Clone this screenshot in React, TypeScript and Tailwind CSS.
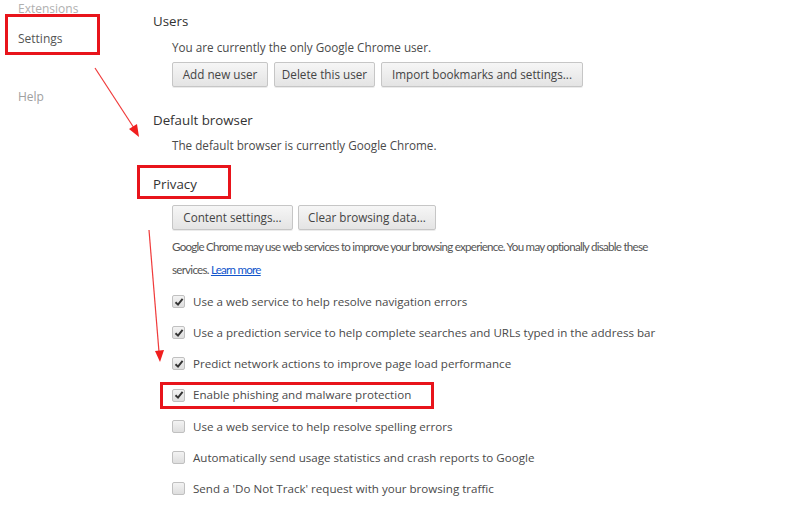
import React from "react";

const font = { fontFamily: '"Open Sans", "Noto Sans", Arial, sans-serif' };

function Btn({ label, w }: { label: string; w: string }) {
  return (
    <button
      className={`h-[25px] ${w} rounded-[2px] border border-[#c6c6c6] bg-gradient-to-b from-[#f6f6f6] to-[#e4e4e4] text-[11.7px] text-[#444] shadow-[0_1px_0_rgba(0,0,0,0.08)] shrink-0`}
    >
      {label}
    </button>
  );
}

function Check({ on, label }: { on: boolean; label: string }) {
  return (
    <div className="flex h-[31.2px] items-center gap-[8px]">
      <span className="flex h-[13px] w-[13px] items-center justify-center rounded-[2px] border border-[#c0c0c0] bg-gradient-to-b from-[#f3f3f3] to-[#dedede]">
        {on && (
          <svg width="10" height="10" viewBox="0 0 10 10">
            <path d="M1.5 5.2 L4 7.6 L8.6 1.8" fill="none" stroke="#333" strokeWidth="1.9" />
          </svg>
        )}
      </span>
      <span className="text-[11.6px] text-[#4a4a4a]">{label}</span>
    </div>
  );
}

export default function App() {
  return (
    <div className="relative h-[517px] w-[800px] overflow-hidden bg-white" style={font}>
      <div className="flex">
        <div className="w-[153px] shrink-0 pl-[18px] text-[12px]">
          <div className="leading-[18px] text-[#b0b0b0]">Extensions</div>
          <div className="mt-[12px] leading-[18px] text-[#555]">Settings</div>
          <div className="mt-[40px] leading-[18px] text-[#a0a0a0]">Help</div>
        </div>

        <div className="flex-1">
          <h2 className="mt-[12px] text-[13.3px] leading-[18px] text-[#333]">Users</h2>
          <div className="pl-[19px]">
            <p className="mt-[8px] text-[11.7px] leading-[18px] text-[#4a4a4a]">
              You are currently the only Google Chrome user.
            </p>
            <div className="mt-[6px] flex gap-[6px]">
              <Btn label="Add new user" w="w-[96px]" />
              <Btn label="Delete this user" w="w-[101px]" />
              <Btn label="Import bookmarks and settings..." w="w-[202px]" />
            </div>
          </div>

          <h2 className="mt-[24px] text-[13.3px] leading-[18px] text-[#333]">Default browser</h2>
          <p className="mt-[7px] pl-[19px] text-[11.7px] leading-[18px] text-[#4a4a4a]">
            The default browser is currently Google Chrome.
          </p>

          <h2 className="mt-[21px] text-[13.3px] leading-[18px] text-[#333]">Privacy</h2>
          <div className="pl-[19px]">
            <div className="mt-[12px] flex gap-[5px]">
              <Btn label="Content settings..." w="w-[121px]" />
              <Btn label="Clear browsing data..." w="w-[138px]" />
            </div>
            <p
              className="mt-[5px] text-[11.6px] leading-[23px] tracking-[-0.75px] text-[#555]"
              style={{ fontFamily: 'Lato, "Open Sans", sans-serif' }}
            >
              Google Chrome may use web services to improve your browsing experience. You may optionally disable these
              <br />
              services. <a className="text-[#15c] underline">Learn more</a>
            </p>
            <div className="mt-[5px]">
              <Check on label="Use a web service to help resolve navigation errors" />
              <Check on label="Use a prediction service to help complete searches and URLs typed in the address bar" />
              <Check on label="Predict network actions to improve page load performance" />
              <Check on label="Enable phishing and malware protection" />
              <Check on={false} label="Use a web service to help resolve spelling errors" />
              <Check on={false} label="Automatically send usage statistics and crash reports to Google" />
              <Check on={false} label="Send a 'Do Not Track' request with your browsing traffic" />
            </div>
          </div>
        </div>
      </div>

      {/* annotation boxes */}
      <div className="absolute left-[5px] top-[14px] h-[41px] w-[95px] border-[3px] border-[#e8141b]" />
      <div className="absolute left-[137px] top-[165px] h-[34px] w-[94px] border-[3px] border-[#e8141b]" />
      <div className="absolute left-[160px] top-[382px] h-[27px] w-[274px] border-[3px] border-[#e8141b]" />

      {/* annotation arrows */}
      <svg className="absolute left-0 top-0" width="800" height="517">
        <line x1="95" y1="68" x2="134" y2="128" stroke="#f03a3a" strokeWidth="1.2" />
        <polygon points="139,137 129,129 137,124" fill="#f01e1e" />
        <line x1="149" y1="230" x2="159" y2="352" stroke="#f03a3a" strokeWidth="1.2" />
        <polygon points="160,362 155,351 164,350" fill="#f01e1e" />
      </svg>
    </div>
  );
}
